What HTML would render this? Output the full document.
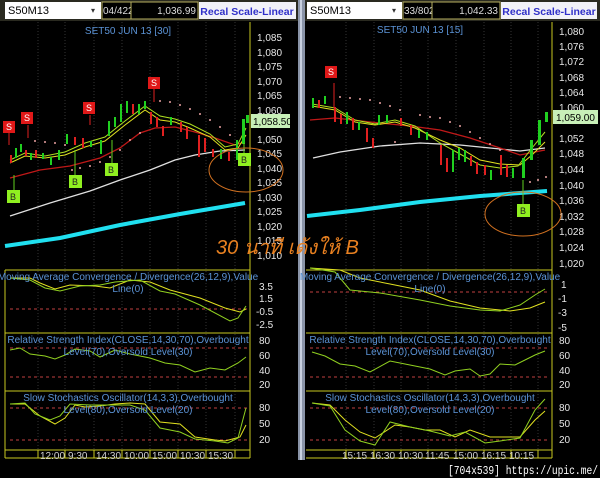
<!DOCTYPE html><html><head><meta charset="utf-8"><style>
body{margin:0;background:#000;width:600px;height:478px;overflow:hidden}
svg{display:block;font-family:"Liberation Sans",sans-serif}
.ax{fill:#e8e8e8;font-size:10px}
.ti{fill:#5b93d6;font-size:10px}
.tm{fill:#d0d0d0;font-size:10px}
</style></head><body>
<svg width="600" height="478" viewBox="0 0 600 478">
<rect width="600" height="478" fill="#000"/>
<rect x="298" y="0" width="7" height="460" fill="#8a94a8"/><rect x="300" y="0" width="2" height="460" fill="#c8d0e0"/>
<rect x="0" y="0" width="298" height="21" fill="#2a2a20"/>
<rect x="5" y="2" width="96" height="17" fill="#fff"/>
<text x="8" y="14" font-size="11" fill="#000">S50M13</text><text x="91" y="13" font-size="8" fill="#333">▾</text>
<rect x="102" y="2" width="29" height="17" fill="#000" stroke="#b8b060"/>
<text x="103" y="14" font-size="10" fill="#ddd">04/422</text>
<rect x="131" y="2" width="67" height="17" fill="#000" stroke="#b8b060"/>
<text x="196" y="14" font-size="10" fill="#ddd" text-anchor="end">1,036.99</text>
<rect x="199" y="2" width="97" height="17" fill="#f2f2f8"/>
<text x="247" y="15" font-size="10.5" font-weight="bold" fill="#3030c8" text-anchor="middle">Recal Scale-Linear</text>
<rect x="305" y="0" width="295" height="21" fill="#2a2a20"/>
<rect x="307" y="2" width="95" height="17" fill="#fff"/>
<text x="310" y="14" font-size="11" fill="#000">S50M13</text><text x="392" y="13" font-size="8" fill="#333">▾</text>
<rect x="403" y="2" width="29" height="17" fill="#000" stroke="#b8b060"/>
<text x="404" y="14" font-size="10" fill="#ddd">33/802</text>
<rect x="432" y="2" width="68" height="17" fill="#000" stroke="#b8b060"/>
<text x="498" y="14" font-size="10" fill="#ddd" text-anchor="end">1,042.33</text>
<rect x="501" y="2" width="96" height="17" fill="#f2f2f8"/>
<text x="549" y="15" font-size="10.5" font-weight="bold" fill="#3030c8" text-anchor="middle">Recal Scale-Linear</text>
<g stroke="#333" stroke-dasharray="1,2">
<path d="M38 22V450M65 22V450M94 22V450M122 22V450M150 22V450M178 22V450M206 22V450M235 22V450"/>
<path d="M346 22V450M374 22V450M401 22V450M428 22V450M456 22V450M484 22V450M511 22V450M538 22V450"/>
</g>
<g stroke="#c8c820" fill="none">
<path d="M250 22V458M5 270H250M5 333H250M5 391H250M5 450H250M5 270V458M5 458H250"/>
<path d="M552 22V458M306 270H552M306 333H552M306 391H552M306 450H552M306 458H552"/>
<path d="M38 450v8M65 450v8M94 450v8M122 450v8M150 450v8M178 450v8M206 450v8M235 450v8M346 450v8M374 450v8M401 450v8M428 450v8M456 450v8M484 450v8M511 450v8M538 450v8"/>
</g>
<text x="128" y="34" class="ti" text-anchor="middle">SET50 JUN 13   [30]</text>
<text x="420" y="33" class="ti" text-anchor="middle">SET50 JUN 13   [15]</text>
<g class="ax">
<text x="257" y="41">1,085</text><text x="257" y="56">1,080</text><text x="257" y="70">1,075</text><text x="257" y="85">1,070</text><text x="257" y="99">1,065</text><text x="257" y="114">1,060</text><text x="257" y="143">1,050</text><text x="257" y="157">1,045</text><text x="257" y="172">1,040</text><text x="257" y="186">1,035</text><text x="257" y="201">1,030</text><text x="257" y="215">1,025</text><text x="257" y="230">1,020</text><text x="257" y="244">1,015</text><text x="257" y="259">1,010</text>
<text x="259" y="290">3.5</text><text x="259" y="302">1.5</text><text x="256" y="315">-0.5</text><text x="256" y="328">-2.5</text>
<text x="259" y="344">80</text><text x="259" y="359">60</text><text x="259" y="374">40</text><text x="259" y="388">20</text>
<text x="259" y="411">80</text><text x="259" y="427">50</text><text x="259" y="443">20</text>
</g>
<g class="ax">
<text x="559" y="35">1,080</text><text x="559" y="50">1,076</text><text x="559" y="65">1,072</text><text x="559" y="81">1,068</text><text x="559" y="96">1,064</text><text x="559" y="111">1,060</text><text x="559" y="142">1,052</text><text x="559" y="157">1,048</text><text x="559" y="173">1,044</text><text x="559" y="189">1,040</text><text x="559" y="204">1,036</text><text x="559" y="220">1,032</text><text x="559" y="235">1,028</text><text x="559" y="251">1,024</text><text x="559" y="267">1,020</text>
<text x="561" y="288">1</text><text x="558" y="302">-1</text><text x="558" y="316">-3</text><text x="558" y="331">-5</text>
<text x="559" y="344">80</text><text x="559" y="359">60</text><text x="559" y="374">40</text><text x="559" y="388">20</text>
<text x="559" y="411">80</text><text x="559" y="427">50</text><text x="559" y="443">20</text>
</g>
<g class="tm"><text x="40" y="459">12:00</text><text x="68" y="459">9:30</text><text x="96" y="459">14:30</text><text x="124" y="459">10:00</text><text x="152" y="459">15:00</text><text x="180" y="459">10:30</text><text x="208" y="459">15:30</text>
<text x="342" y="459">15:15</text><text x="370" y="459">16:30</text><text x="398" y="459">10:30</text><text x="425" y="459">11:45</text><text x="453" y="459">15:00</text><text x="481" y="459">16:15</text><text x="509" y="459">10:15</text></g>
<polyline points="5,246 60,238 120,225 180,214 245,203" stroke="#20e0f0" stroke-width="4" fill="none"/>
<polyline points="10,216 50,203 90,191 120,180 150,170 175,160 195,155 220,151 245,150" stroke="#e0e0e0" stroke-width="1.3" fill="none"/>
<polyline points="10,178 40,170 70,166 100,158 120,148 140,133 155,128 175,127 195,132 215,138 235,145 245,142" stroke="#c01818" stroke-width="1.3" fill="none"/>
<polyline points="10,163 25,156 45,158 65,155 85,147 105,141 125,125 145,110 160,120 175,122 190,128 210,137 225,150 238,148 246,135" stroke="#e0e020" stroke-width="1" fill="none"/>
<polyline points="10,160 25,153 45,156 65,152 85,143 105,137 125,121 145,106 160,116 175,119 190,124 210,134 225,147 238,144 246,128" stroke="#b0e020" stroke-width="1" fill="none"/>
<g fill="#e8a0a0"><circle cx="35" cy="141" r="1"/><circle cx="45" cy="142" r="1"/><circle cx="55" cy="143" r="1"/><circle cx="65" cy="145" r="1"/><circle cx="72" cy="170" r="1"/><circle cx="80" cy="168" r="1"/><circle cx="90" cy="166" r="1"/><circle cx="100" cy="162" r="1"/><circle cx="110" cy="157" r="1"/><circle cx="120" cy="150" r="1"/><circle cx="130" cy="140" r="1"/><circle cx="140" cy="133" r="1"/><circle cx="160" cy="101" r="1"/><circle cx="170" cy="102" r="1"/><circle cx="180" cy="105" r="1"/><circle cx="190" cy="109" r="1"/><circle cx="200" cy="114" r="1"/><circle cx="210" cy="120" r="1"/><circle cx="220" cy="127" r="1"/><circle cx="230" cy="135" r="1"/></g>
<g>
<rect x="10" y="155" width="2" height="8" fill="#e02020"/><rect x="15" y="148" width="2" height="10" fill="#20d020"/><rect x="20" y="144" width="2" height="8" fill="#20d020"/><rect x="25" y="150" width="2" height="6" fill="#e02020"/><rect x="30" y="153" width="2" height="7" fill="#20d020"/><rect x="35" y="150" width="2" height="8" fill="#e02020"/><rect x="42" y="153" width="2" height="6" fill="#20d020"/><rect x="50" y="157" width="2" height="8" fill="#20d020"/><rect x="58" y="150" width="2" height="10" fill="#20d020"/><rect x="66" y="134" width="2" height="10" fill="#20d020"/><rect x="74" y="137" width="2" height="8" fill="#e02020"/><rect x="82" y="138" width="2" height="10" fill="#e02020"/><rect x="90" y="141" width="2" height="6" fill="#20d020"/><rect x="100" y="140" width="2" height="14" fill="#20d020"/><rect x="108" y="121" width="2" height="15" fill="#20d020"/><rect x="114" y="117" width="2" height="10" fill="#20d020"/><rect x="120" y="104" width="2" height="18" fill="#20d020"/><rect x="126" y="101" width="2" height="12" fill="#20d020"/><rect x="132" y="104" width="2" height="10" fill="#e02020"/><rect x="138" y="104" width="2" height="10" fill="#20d020"/><rect x="144" y="101" width="2" height="8" fill="#20d020"/><rect x="150" y="112" width="2" height="12" fill="#e02020"/><rect x="156" y="117" width="2" height="10" fill="#e02020"/><rect x="162" y="126" width="2" height="10" fill="#e02020"/><rect x="170" y="117" width="2" height="8" fill="#20d020"/><rect x="180" y="122" width="2" height="10" fill="#e02020"/><rect x="186" y="127" width="2" height="12" fill="#e02020"/><rect x="198" y="135" width="2" height="22" fill="#e02020"/><rect x="204" y="138" width="2" height="14" fill="#e02020"/><rect x="212" y="149" width="2" height="8" fill="#e02020"/><rect x="220" y="149" width="2" height="10" fill="#20d020"/><rect x="228" y="152" width="2" height="9" fill="#e02020"/><rect x="236" y="140" width="2" height="20" fill="#20d020"/><rect x="242" y="119" width="3" height="25" fill="#20d020"/><rect x="246" y="115" width="3" height="8" fill="#20d020"/>
</g>
<g stroke="#e02020"><path d="M9 132V145M28 125V138M90 115V125M154 88V102"/></g>
<g stroke="#60d020"><path d="M14 190V175M75 177V150M112 165V140M244 155V143"/></g>
<g font-size="9" text-anchor="middle">
<rect x="3" y="121" width="12" height="12" fill="#e01818"/><text x="9" y="130" fill="#fff">S</text>
<rect x="21" y="112" width="12" height="12" fill="#e01818"/><text x="27" y="121" fill="#fff">S</text>
<rect x="83" y="102" width="12" height="12" fill="#e01818"/><text x="89" y="111" fill="#fff">S</text>
<rect x="148" y="77" width="12" height="12" fill="#e01818"/><text x="154" y="86" fill="#fff">S</text>
<rect x="7" y="190" width="13" height="13" fill="#90f020"/><text x="13" y="200" fill="#222">B</text>
<rect x="69" y="175" width="13" height="13" fill="#90f020"/><text x="75" y="185" fill="#222">B</text>
<rect x="105" y="163" width="13" height="13" fill="#90f020"/><text x="111" y="173" fill="#222">B</text>
<rect x="238" y="153" width="13" height="13" fill="#90f020"/><text x="244" y="163" fill="#222">B</text>
</g>
<ellipse cx="246" cy="170" rx="37" ry="22" fill="none" stroke="#d07020" stroke-width="1"/>
<rect x="251" y="114" width="39" height="14" fill="#c8f0b8"/><text x="253" y="125" font-size="10" fill="#000">1,058.50</text>
<polyline points="307,216 360,210 420,202 480,196 547,191" stroke="#20e0f0" stroke-width="4" fill="none"/>
<polyline points="313,158 340,152 380,146 420,143 460,145 490,148 520,151 545,148" stroke="#e0e0e0" stroke-width="1.3" fill="none"/>
<polyline points="310,120 335,118 370,122 410,126 440,130 470,138 500,148 520,155 545,150" stroke="#c01818" stroke-width="1.3" fill="none"/>
<polyline points="312,106 335,110 355,122 375,125 395,122 415,128 440,140 460,148 480,160 500,164 520,165 532,155 545,142" stroke="#e0e020" stroke-width="1" fill="none"/>
<polyline points="312,104 335,108 355,120 375,124 395,120 415,126 440,143 460,154 480,165 500,168 518,166 532,148 545,132" stroke="#b0e020" stroke-width="1" fill="none"/>
<g fill="#e8a0a0"><circle cx="340" cy="97" r="1"/><circle cx="350" cy="98" r="1"/><circle cx="360" cy="99" r="1"/><circle cx="370" cy="100" r="1"/><circle cx="380" cy="103" r="1"/><circle cx="390" cy="106" r="1"/><circle cx="400" cy="110" r="1"/><circle cx="420" cy="115" r="1"/><circle cx="430" cy="117" r="1"/><circle cx="440" cy="118" r="1"/><circle cx="450" cy="122" r="1"/><circle cx="460" cy="126" r="1"/><circle cx="470" cy="132" r="1"/><circle cx="480" cy="138" r="1"/><circle cx="490" cy="144" r="1"/><circle cx="500" cy="150" r="1"/><circle cx="395" cy="142" r="1"/><circle cx="530" cy="182" r="1"/><circle cx="538" cy="180" r="1"/><circle cx="546" cy="177" r="1"/></g>
<g>
<rect x="312" y="98" width="2" height="10" fill="#20d020"/><rect x="318" y="100" width="2" height="8" fill="#e02020"/><rect x="324" y="96" width="2" height="8" fill="#20d020"/><rect x="334" y="107" width="2" height="15" fill="#e02020"/><rect x="340" y="114" width="2" height="10" fill="#e02020"/><rect x="346" y="112" width="2" height="12" fill="#20d020"/><rect x="352" y="118" width="2" height="12" fill="#e02020"/><rect x="358" y="122" width="2" height="8" fill="#20d020"/><rect x="366" y="128" width="2" height="14" fill="#e02020"/><rect x="372" y="138" width="2" height="10" fill="#e02020"/><rect x="378" y="115" width="2" height="10" fill="#20d020"/><rect x="386" y="115" width="2" height="8" fill="#20d020"/><rect x="400" y="118" width="2" height="8" fill="#e02020"/><rect x="410" y="125" width="2" height="10" fill="#e02020"/><rect x="418" y="130" width="2" height="8" fill="#20d020"/><rect x="426" y="132" width="2" height="8" fill="#20d020"/><rect x="440" y="145" width="2" height="20" fill="#e02020"/><rect x="446" y="158" width="2" height="14" fill="#e02020"/><rect x="452" y="150" width="2" height="22" fill="#20d020"/><rect x="458" y="148" width="2" height="12" fill="#20d020"/><rect x="464" y="150" width="2" height="12" fill="#20d020"/><rect x="470" y="156" width="2" height="10" fill="#e02020"/><rect x="476" y="162" width="2" height="12" fill="#e02020"/><rect x="484" y="165" width="2" height="10" fill="#e02020"/><rect x="490" y="170" width="2" height="10" fill="#20d020"/><rect x="500" y="155" width="2" height="20" fill="#e02020"/><rect x="506" y="165" width="2" height="12" fill="#e02020"/><rect x="512" y="168" width="2" height="10" fill="#20d020"/><rect x="522" y="158" width="3" height="20" fill="#20d020"/><rect x="530" y="140" width="3" height="20" fill="#20d020"/><rect x="538" y="120" width="3" height="25" fill="#20d020"/><rect x="545" y="112" width="3" height="10" fill="#20d020"/>
</g>
<path d="M334 83V108" stroke="#e02020"/><path d="M523 180V206" stroke="#60d020"/>
<g font-size="9" text-anchor="middle">
<rect x="325" y="66" width="12" height="12" fill="#e01818"/><text x="331" y="75" fill="#fff">S</text>
<rect x="517" y="204" width="13" height="13" fill="#90f020"/><text x="523" y="214" fill="#222">B</text>
</g>
<ellipse cx="523" cy="214" rx="38" ry="22" fill="none" stroke="#d07020" stroke-width="1"/>
<rect x="553" y="110" width="45" height="14" fill="#c8f0b8"/><text x="556" y="121" font-size="10" fill="#000">1,059.00</text>
<text x="216" y="254" font-size="20" font-style="italic" fill="#e88020" font-family="'Liberation Sans','Noto Sans CJK SC',sans-serif">30 นาที เด้งให้ B</text>
<g stroke="#c04040" stroke-dasharray="3,3">
<path d="M10 309H248M10 348H248M10 377H248M10 408H248M10 440H248"/>
<path d="M310 292H550M310 348H550M310 377H550M310 408H550M310 440H550"/>
</g>
<polyline points="10,278 30,278 40,283 55,289 70,285 95,286 110,288 130,280 150,282 170,290 200,298 225,308 240,312 246,309" stroke="#e0e020" fill="none"/>
<polyline points="10,278 30,280 45,288 60,291 80,286 100,285 115,282 140,280 160,291 175,294 200,305 230,321 238,318 246,306" stroke="#90d020" fill="none"/>
<polyline points="10,350 20,348 30,354 45,356 55,359 65,355 75,349 90,351 100,357 115,350 130,354 150,358 165,363 180,365 195,372 210,368 225,370 238,363 246,357" stroke="#90d020" fill="none"/>
<polyline points="10,404 25,404 40,416 55,424 65,418 75,405 85,407 100,406 115,404 130,403 145,404 160,422 180,424 195,437 215,440 225,441 240,437 246,425" stroke="#e0e020" fill="none"/>
<polyline points="10,404 25,403 35,414 50,420 60,416 70,404 90,405 110,405 130,405 145,410 160,428 180,432 195,439 215,441 228,443 238,438 246,408" stroke="#90d020" fill="none"/>
<polyline points="310,268 340,270 360,278 390,284 420,290 450,301 480,308 510,311 530,308 545,302" stroke="#e0e020" fill="none"/>
<polyline points="310,268 335,272 350,290 380,293 420,300 450,306 480,310 500,311 520,305 535,295 545,289" stroke="#90d020" fill="none"/>
<polyline points="312,352 325,356 340,364 355,366 370,372 390,361 410,365 430,369 445,375 455,371 470,369 480,376 490,374 500,364 515,365 525,360 535,355 545,351" stroke="#90d020" fill="none"/>
<polyline points="312,403 330,405 345,420 360,432 375,438 395,425 410,427 425,430 440,430 455,437 470,430 490,437 510,437 520,437 535,420 545,411" stroke="#e0e020" fill="none"/>
<polyline points="312,403 330,406 345,430 360,441 375,445 390,422 410,427 430,431 450,436 465,432 485,443 500,441 520,438 535,410 545,399" stroke="#90d020" fill="none"/>
<g class="ti">
<text x="128" y="280" text-anchor="middle">Moving Average Convergence / Divergence(26,12,9),Value</text><text x="128" y="292" text-anchor="middle">Line(0)</text>
<text x="128" y="343" text-anchor="middle">Relative Strength Index(CLOSE,14,30,70),Overbought</text><text x="128" y="355" text-anchor="middle">Level(70),Oversold Level(30)</text>
<text x="128" y="401" text-anchor="middle">Slow Stochastics Oscillator(14,3,3),Overbought</text><text x="128" y="413" text-anchor="middle">Level(80),Oversold Level(20)</text>
<text x="430" y="280" text-anchor="middle">Moving Average Convergence / Divergence(26,12,9),Value</text><text x="430" y="292" text-anchor="middle">Line(0)</text>
<text x="430" y="343" text-anchor="middle">Relative Strength Index(CLOSE,14,30,70),Overbought</text><text x="430" y="355" text-anchor="middle">Level(70),Oversold Level(30)</text>
<text x="430" y="401" text-anchor="middle">Slow Stochastics Oscillator(14,3,3),Overbought</text><text x="430" y="413" text-anchor="middle">Level(80),Oversold Level(20)</text>
</g>
<text x="448" y="474" font-size="12" fill="#fff" textLength="150" lengthAdjust="spacingAndGlyphs" font-family="'Liberation Mono',monospace">[704x539] https://upic.me/</text>
</svg>
</body></html>
